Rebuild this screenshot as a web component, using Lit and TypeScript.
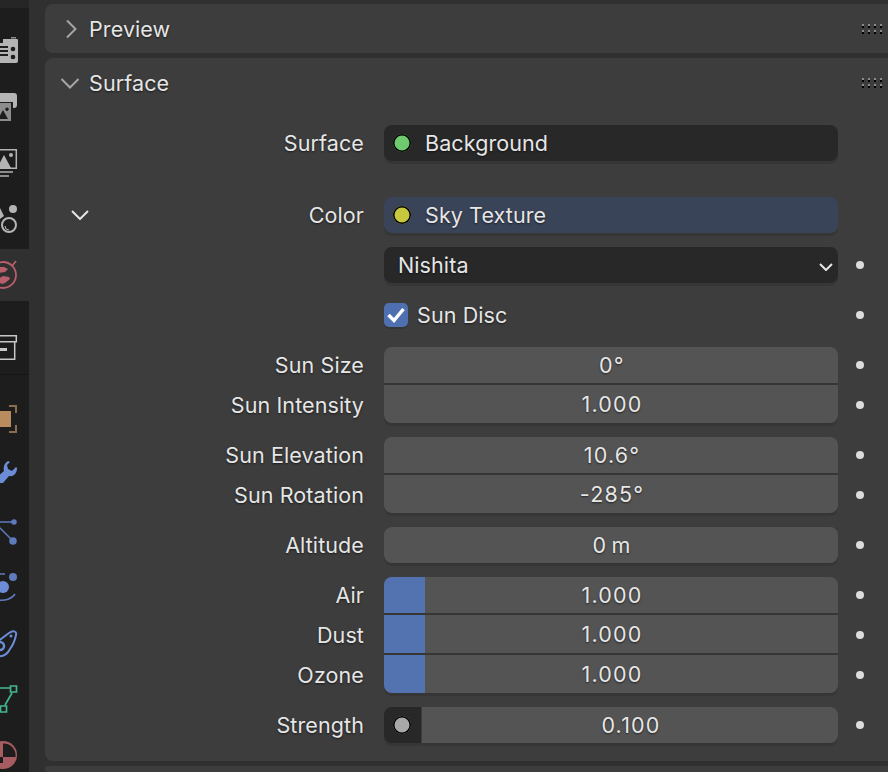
import { LitElement, css, html, svg } from "lit";
import { customElement } from "lit/decorators.js";

const GREY = "#b4b4b4";
const BLUE = "#6c8dd6";

// viewBox values are page coordinates, so icons read the same as the screenshot
const topIcons = svg`
  <path fill=${GREY} d="M-2 39h10v0h9a1 1 0 0 1 1 1v21a2 2 0 0 1-2 2h-18z" />
  <path fill="#8c8c8c" d="M11 37h5v1.500h-5z" />
  <path fill="#1d1d1d" d="M-2 39h5v4h-5zM-2 46h10v2h-10zM-2 50h10v2h-10zM-2 54h10v2h-10z" />
  <circle cx="13" cy="49" r="2.300" fill="#1d1d1d" /><circle cx="13" cy="57" r="2.300" fill="#1d1d1d" />

  <path fill=${GREY} d="M-2 93h16a3 3 0 0 1 3 3v9a3 3 0 0 1-3 3h-1v-6h-15z" />
  <path fill="#8c8c8c" d="M-2 103h13v18h-13z" />
  <path fill="#1d1d1d" d="M3 110l5 9h-10zM7 107.500a1.700 1.700 0 1 0 .01 0z" />

  <path fill="none" stroke=${GREY} stroke-width="1.500" d="M-2 149.700h18.300v18.600h-18.300" />
  <path fill=${GREY} d="M4 155l7 13h-14z" /><circle cx="11" cy="155" r="2" fill=${GREY} />
  <path fill="#8c8c8c" d="M-2 171h15v2h-15zM-2 175h11v2h-11z" />

  <circle cx="13" cy="209" r="4" fill=${GREY} />
  <circle cx="9" cy="225" r="7" fill="none" stroke=${GREY} stroke-width="2" />
  <path fill="none" stroke=${GREY} d="M5 226a4 4 0 0 0 4 4" />
  <path fill=${GREY} d="M-2 208h2l4 8-4 3h-2z" />
`;

const worldIcon = svg`
  <circle cx="3" cy="275" r="13" fill="none" stroke="#b85f6b" stroke-width="1.800" />
  <path stroke="#b85f6b" stroke-width="1.800" d="M12 266l4-5" />
  <path fill="#b85f6b" d="M-2 267h6l4 2-3 3-7 1zM-2 279l5-3 6 1 1 2-5 4-3 1-4-2z" />
`;

const collectionIcon = svg`
  <path fill="none" stroke="#c8c8c8" stroke-width="1.500" d="M-2 335.700h18.300v6h-18.300M14.700 342v17.300h-16.700" />
  <path fill="#c8c8c8" d="M-2 348h9v3h-9z" />
`;

const bottomIcons = svg`
  <path fill="#b98c5e" d="M-2 411h13v16h-13z" />
  <path fill="none" stroke="#8a6d4e" stroke-width="2" d="M9 406h7v7M9 432h7v-7" />

  <path fill=${BLUE} d="M8 461c-4 2-5 7-4 10l-7 6v6h6l6-7c5 1 8-3 8-8l-1-1-4 4-4-2-1-4 3-3z" />

  <g fill="#5f7bbd" stroke="#5f7bbd" stroke-width="1.500">
    <path d="M-2 522h16M-1 527l12 12" fill="none" />
    <circle cx="14" cy="522" r="2" /><circle cx="13" cy="541" r="3" />
  </g>

  <circle cx="3" cy="587" r="6" fill=${BLUE} />
  <circle cx="13" cy="577" r="4" fill="#5f7bbd" />
  <path fill="none" stroke="#5f7bbd" stroke-width="1.500" d="M-1 574h6M15 594c-3 5-10 7-17 6" />

  <path fill="none" stroke=${BLUE} stroke-width="2" d="M-3 642l12-9c4-3 8-2 7 2-1 5-3 10-6 14-3 6-8 8-13 7" />
  <circle cx="0" cy="646" r="4" fill="none" stroke=${BLUE} stroke-width="2.500" />
  <circle cx="11" cy="636" r="1.500" fill=${BLUE} />

  <g fill="none" stroke="#43b58d" stroke-width="1.700">
    <path d="M10.500 686h6v6h-6zM.5 706h6v6h-6zM-2 688h12M12 693l-7 12M-2 709h2" />
  </g>

  <circle cx="3" cy="755" r="14" fill="#a65c60" />
  <path fill="#1d1d1d" d="M3 743.500a12 12 0 0 1 12.500 13.500h-12.500zM-2 757h5v6h-5z" />
`;

const GRIP_DOTS = [0, 6, 12, 18].flatMap((x) => [0, 6].map((y) => [x, y]));

interface Row {
  label: string;
  value: string;
  pct?: boolean;
}

@customElement("app-root")
export class AppRoot extends LitElement {
  static styles = css`
    :host {
      display: flex;
      width: 888px;
      height: 772px;
      overflow: hidden;
      background: #303030;
      font-family: Inter, "Liberation Sans", sans-serif;
      font-size: 21.500px;
      letter-spacing: 0.1px;
      color: #e6e6e6;
      text-shadow: 0 1px 2px rgba(0, 0, 0, 0.6);
    }
    .tabs {
      width: 29px;
      flex: none;
      display: flex;
      flex-direction: column;
      background: #1d1d1d;
    }
    .tabs svg {
      display: block;
      overflow: hidden;
    }
    .cap {
      height: 8px;
      background: #262626;
    }
    .active {
      background: #303030;
    }
    .split {
      border-bottom: 1px solid #161616;
    }
    .area {
      flex: 1;
      min-width: 0;
      padding: 4px 0 0 16px;
      display: flex;
      flex-direction: column;
      gap: 5px;
    }
    .panel {
      background: #3d3d3d;
      border-radius: 8px 0 0 8px;
    }
    .head {
      height: 49px;
      display: flex;
      align-items: center;
      padding: 0 6px 0 10px;
    }
    .head svg.chev {
      flex: none;
    }
    .head span {
      flex: 1;
    }
    .body {
      display: flex;
      flex-direction: column;
      gap: 14px;
      padding: 18px 0;
    }
    .row {
      display: grid;
      grid-template-columns: 319px 454px 1fr;
      column-gap: 20px;
      align-items: center;
      height: 36px;
    }
    .row.tall {
      height: 38px;
    }
    .row.tall .label,
    .row.tall .dot {
      margin-top: 2px;
    }
    .row.check {
      height: 24px;
      margin: 6px 0;
    }
    .row.spaced {
      margin-top: 22px;
    }
    .stack {
      display: flex;
      flex-direction: column;
      gap: 2px;
    }
    .label {
      display: flex;
      align-items: center;
      justify-content: flex-end;
    }
    .label.open {
      justify-content: space-between;
      padding-left: 26px;
    }
    .dot {
      width: 8px;
      height: 8px;
      margin-left: -2px;
      border-radius: 50%;
      background: #dcdcdc;
    }
    .field {
      height: 100%;
      display: flex;
      align-items: center;
      box-sizing: border-box;
      border-radius: 8px;
      box-shadow: 0 3px 0 #363636;
    }
    .dark {
      background: #282828;
    }
    .linked {
      background: #3a4459;
    }
    .socket {
      width: 18px;
      height: 18px;
      box-sizing: border-box;
      flex: none;
      margin: 0 14px 0 9px;
      border-radius: 50%;
      box-shadow: inset 0 0 0 1.500px #000;
    }
    .select {
      justify-content: space-between;
      padding: 0 5px 0 14px;
    }
    .select svg {
      margin-top: 4px;
    }
    .num {
      position: relative;
      justify-content: center;
      overflow: hidden;
      background: #545454;
      box-shadow: 0 2px 0 #363636;
    }
    .stack .num {
      border-radius: 0;
    }
    .stack .row:first-child .num {
      border-radius: 8px 8px 0 0;
    }
    .stack .row:last-child .num {
      border-radius: 0 0 8px 8px;
      box-shadow: 0 3px 0 #363636;
    }
    .single.num {
      border-radius: 8px;
      box-shadow: 0 3px 0 #363636;
    }
    .fill {
      position: absolute;
      left: 0;
      top: 0;
      bottom: 0;
      background: #5272b0;
    }
    .num b {
      position: relative;
      margin-left: 2px;
      font-weight: 400;
      letter-spacing: 1.200px;
      word-spacing: -3px;
    }
    .strength {
      display: flex;
      height: 100%;
      gap: 1px;
    }
    .swatch {
      width: 37px;
      flex: none;
      border-radius: 8px 0 0 8px;
    }
    .swatch .socket {
      margin: 0 0 0 9px;
      background: #a8a8a8;
    }
    .strength .num {
      flex: 1;
      border-radius: 0 8px 8px 0;
      box-shadow: 0 3px 0 #363636;
    }
    .toggle {
      display: flex;
      align-items: center;
      gap: 9px;
      line-height: 24px;
    }
    .box {
      width: 24px;
      height: 24px;
      border-radius: 5px;
      background: #4e70b0;
      box-shadow: 0 2px 0 #363636;
    }
    .box svg {
      display: block;
    }
    .tail {
      height: 10px;
    }
  `;

  private head(title: string, open: boolean) {
    return html`
      <div class="head">
        <svg class="chev" width="34" height="24" viewBox="0 0 34 24" fill="none" stroke="#a6a6a6" stroke-width="2">
          <path d=${open ? "M6.500 8l8.500 8.500L23.500 8" : "M12 3.500l8.500 8.500L12 20.500"} />
        </svg>
        <span>${title}</span>
        <svg width="20" height="10" viewBox="0 0 20 10">
          ${GRIP_DOTS.map(
            ([x, y]) => svg`
              <rect x=${x} y=${y} width="2" height="2" fill="#8a8a8a" />
              <rect x=${x} y=${y + 2} width="2" height="2" fill="#000" />`,
          )}
        </svg>
      </div>
    `;
  }

  private row(label: unknown, field: unknown, extra = "") {
    return html`
      <div class="row ${extra}">
        ${label}
        ${field}
        <div class="dot"></div>
      </div>
    `;
  }

  private numRow(r: Row, tall = false) {
    return this.row(
      html`<div class="label">${r.label}</div>`,
      html`<div class="field num">
        ${r.pct ? html`<div class="fill" style="width:41px"></div>` : ""}
        <b>${r.value}</b>
      </div>`,
      tall ? "tall" : "",
    );
  }

  private group(rows: Row[]) {
    return html`<div class="stack">${rows.map((r, i) => this.numRow(r, i > 0))}</div>`;
  }

  render() {
    return html`
      <nav class="tabs">
        <div class="cap"></div>
        <svg width="29" height="241" viewBox="0 8 29 241">${topIcons}</svg>
        <div class="active"><svg width="29" height="52" viewBox="0 249 29 52">${worldIcon}</svg></div>
        <div class="split"><svg width="29" height="73" viewBox="0 301 29 73">${collectionIcon}</svg></div>
        <svg width="29" height="397" viewBox="0 375 29 397">${bottomIcons}</svg>
      </nav>
      <main class="area">
        <section class="panel">${this.head("Preview", false)}</section>
        <section class="panel">
          ${this.head("Surface", true)}
          <div class="body">
            <div class="row">
              <div class="label">Surface</div>
              <div class="field dark"><i class="socket" style="background:#6fc96f"></i>Background</div>
            </div>
            <div class="row spaced">
              <div class="label open">
                <svg width="18" height="10" viewBox="0 0 18 10" fill="none" stroke="#e6e6e6" stroke-width="2">
                  <path d="M1 1l8 8 8-8" />
                </svg>
                Color
              </div>
              <div class="field linked"><i class="socket" style="background:#c8c83f"></i>Sky Texture</div>
            </div>
            ${this.row(
              html`<div></div>`,
              html`<div class="field dark select">
                Nishita
                <svg width="14" height="8" viewBox="0 0 14 8" fill="none" stroke="#e6e6e6" stroke-width="2">
                  <path d="M1 1l6 6 6-6" />
                </svg>
              </div>`,
            )}
            ${this.row(
              html`<div></div>`,
              html`<div class="toggle">
                <div class="box">
                  <svg width="24" height="24" viewBox="0 0 24 24" fill="none" stroke="#fff" stroke-width="3.500">
                    <path d="M4.500 12l5.500 5.500 9.500-11.500" />
                  </svg>
                </div>
                Sun Disc
              </div>`,
              "check",
            )}
            ${this.group([
              { label: "Sun Size", value: "0°" },
              { label: "Sun Intensity", value: "1.000" },
            ])}
            ${this.group([
              { label: "Sun Elevation", value: "10.6°" },
              { label: "Sun Rotation", value: "-285°" },
            ])}
            ${this.row(
              html`<div class="label">Altitude</div>`,
              html`<div class="field num single"><b>0 m</b></div>`,
            )}
            ${this.group([
              { label: "Air", value: "1.000", pct: true },
              { label: "Dust", value: "1.000", pct: true },
              { label: "Ozone", value: "1.000", pct: true },
            ])}
            ${this.row(
              html`<div class="label">Strength</div>`,
              html`<div class="strength">
                <div class="field dark swatch"><i class="socket"></i></div>
                <div class="field num"><b>0.100</b></div>
              </div>`,
            )}
          </div>
        </section>
        <section class="panel tail"></section>
      </main>
    `;
  }
}
